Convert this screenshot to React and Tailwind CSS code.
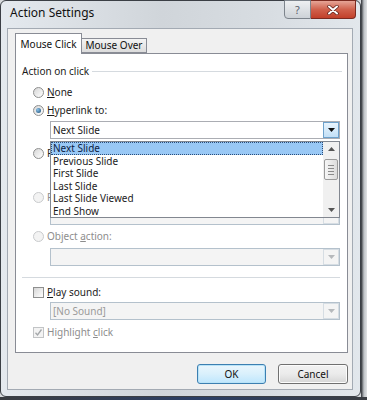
import React from "react";

const ui = "font-['Noto_Sans',sans-serif]";

function Radio({ checked, disabled }) {
  return (
    <span
      className={`flex h-[11px] w-[11px] shrink-0 items-center justify-center rounded-full border ${
        disabled
          ? "border-[#c9cbcd] bg-[#f3f3f3]"
          : "border-[#8e8f8f] bg-[linear-gradient(135deg,#d6d6d6,#ffffff)]"
      }`}
    >
      {checked ? (
        <span className="h-[5px] w-[5px] rounded-full bg-[radial-gradient(circle_at_35%_35%,#8cc3ea,#174a73)]" />
      ) : null}
    </span>
  );
}

function Check({ checked, disabled }) {
  return (
    <span
      className={`flex h-[11px] w-[11px] shrink-0 items-center justify-center border ${
        disabled
          ? "border-[#c2c4c6] bg-[#f3f3f3]"
          : "border-[#8e8f8f] bg-[linear-gradient(135deg,#d6d6d6,#ffffff)]"
      }`}
    >
      {checked ? (
        <svg width="9" height="9" viewBox="0 0 9 9">
          <path d="M1.5 4.8 L3.5 7 L7.5 1.5" fill="none" stroke="#a4a7aa" strokeWidth="1.3" />
        </svg>
      ) : null}
    </span>
  );
}

function Arrow({ color }) {
  return (
    <svg width="7" height="4" viewBox="0 0 7 4">
      <path d="M0 0 H7 L3.5 4 Z" fill={color} />
    </svg>
  );
}

function Combo({ value, hot, disabled }) {
  return (
    <div
      className={`ml-[34px] flex h-[18px] w-[290px] items-center border ${
        disabled ? "border-[#b4c1cc] bg-[#f4f4f4]" : "border-[#abadb3] bg-white"
      }`}
    >
      <span
        className={`flex-1 pl-[2px] text-[10px] leading-none ${
          disabled ? "text-[#9a9a9a]" : "text-[#1b1b1b]"
        }`}
      >
        {value}
      </span>
      <span
        className={`flex h-[16px] w-[16px] items-center justify-center border ${
          hot
            ? "border-[#6ea2cc] bg-[linear-gradient(#e8f4fd,#c3e0f6)]"
            : disabled
            ? "border-[#d6dde3] bg-[#f4f4f4]"
            : "border-[#c8c8c8] bg-[#eeeeee]"
        }`}
      >
        <Arrow color={hot ? "#111" : "#b6b9bc"} />
      </span>
    </div>
  );
}

function OptionRow({ children, control, dim, clipped }) {
  return (
    <div className="ml-[17px] flex h-[14px] items-center gap-[3px]">
      {control}
      <span
        className={`text-[10px] leading-none ${dim ? "text-[#8d8d8d]" : "text-[#1b1b1b]"} ${
          clipped ? "w-[3px] overflow-hidden whitespace-nowrap" : ""
        }`}
      >
        {children}
      </span>
    </div>
  );
}

const slides = ["Next Slide", "Previous Slide", "First Slide", "Last Slide", "Last Slide Viewed", "End Show"];

function SlideList() {
  return (
    <div className="absolute left-[34px] top-[87px] flex h-[77px] w-[290px] border border-[#828790] bg-white">
      <div className="flex-1">
        {slides.map((s, i) => (
          <div
            key={s}
            className={`h-[12.5px] pl-px text-[10px] leading-[11px] ${
              i === 0
                ? "border border-dotted border-[#2a4d7a] bg-[#99c8f5] text-[#0b1c44]"
                : "border border-transparent text-[#1b1b1b]"
            }`}
          >
            {s}
          </div>
        ))}
      </div>
      <div className="flex w-[16px] flex-col items-center bg-[#f0f0f0]">
        <div className="flex h-[14px] items-center justify-center">
          <svg width="7" height="4" viewBox="0 0 7 4">
            <path d="M0 4 H7 L3.5 0 Z" fill="#555" />
          </svg>
        </div>
        <div className="mt-[3px] flex h-[21px] w-[14px] flex-col items-center justify-center gap-[2px] rounded-[2px] border border-[#9a9a9a] bg-[linear-gradient(90deg,#f6f6f6,#dcdcdc)]">
          <span className="h-px w-[6px] bg-[#8a8a8a]" />
          <span className="h-px w-[6px] bg-[#8a8a8a]" />
          <span className="h-px w-[6px] bg-[#8a8a8a]" />
          <span className="h-px w-[6px] bg-[#8a8a8a]" />
        </div>
        <div className="mt-auto flex h-[14px] items-center justify-center">
          <Arrow color="#555" />
        </div>
      </div>
    </div>
  );
}

export default function App() {
  return (
    <div className={`flex h-[400px] w-[367px] flex-col overflow-hidden bg-[#d6d9dc] ${ui}`}>
      <div className="flex h-[397px]">
        <div className="flex h-[397px] w-[361px] flex-col rounded-[6px] border border-[#3b3f45] bg-[linear-gradient(90deg,#e4e9ee,#d0d5da_45%,#d8dde2_75%,#e2e7ec)]">
          {/* title bar */}
          <div className="flex h-[27px] items-start">
            <span className="ml-[9px] mt-[5px] text-[12px] leading-[14px] text-[#111]">Action Settings</span>
            <div className="ml-auto mr-[4px] flex -mt-px">
              <div className="flex h-[19px] w-[27px] items-center justify-center rounded-bl-[4px] border border-[#7d848c] bg-[linear-gradient(#eef0f2,#cdd2d7)] text-[11px] leading-none text-[#58606a]">
                ?
              </div>
              <div className="flex h-[19px] w-[45px] items-center justify-center rounded-br-[4px] border border-l-0 border-[#7b2a20] bg-[linear-gradient(#e6a597,#d0614c_50%,#c2402a)]">
                <svg width="12" height="10" viewBox="0 0 12 10">
                  <path d="M2 1.5 L10 8.5 M10 1.5 L2 8.5" stroke="#5a1d16" strokeWidth="3.4" strokeLinecap="round" />
                  <path d="M2 1.5 L10 8.5 M10 1.5 L2 8.5" stroke="#ffffff" strokeWidth="2" strokeLinecap="round" />
                </svg>
              </div>
            </div>
          </div>

          {/* client area */}
          <div className="ml-[6px] h-[362px] w-[346px] border border-[#a3aab3] bg-[#f0f0f0]">
            <div className="ml-[7px] mt-[4px] flex h-[20px] items-end">
              <div className="relative z-10 -mb-px flex h-[21px] w-[67px] items-center justify-center border border-b-0 border-[#898c95] bg-white text-[10px] text-[#111]">
                Mouse Click
              </div>
              <div className="flex h-[15px] w-[65px] items-center justify-center border border-l-0 border-[#898c95] bg-[linear-gradient(#f4f4f4,#dcdcdc)] text-[10px] text-[#111]">
                Mouse Over
              </div>
            </div>

            <div className="relative ml-[7px] h-[300px] w-[333px] border border-[#898c95] bg-white">
              <div className="mt-[10px] flex h-[14px] items-center">
                <span className="ml-[6px] text-[10px] leading-none text-[#1b1b1b]">Action on click</span>
                <span className="ml-[3px] h-px w-[250px] bg-[#d5dadf]" />
              </div>

              <div className="mt-[7px]">
                <OptionRow control={<Radio />}>
                  <span className="underline underline-offset-1">N</span>one
                </OptionRow>
              </div>
              <div className="mt-[4px]">
                <OptionRow control={<Radio checked />}>
                  <span className="underline underline-offset-1">H</span>yperlink to:
                </OptionRow>
              </div>
              <div className="mt-[4px]">
                <Combo value="Next Slide" hot />
              </div>

              <div className="mt-[7px]">
                <OptionRow control={<Radio />} clipped>
                  Run program:
                </OptionRow>
              </div>
              <div className="ml-[34px] mt-[4px] h-[18px] w-[220px] border border-[#abadb3] bg-white" />
              <div className="mt-[8px]">
                <OptionRow control={<Radio disabled />} dim clipped>
                  Run macro:
                </OptionRow>
              </div>
              <div className="mt-[3px]">
                <Combo value="" disabled />
              </div>

              <div className="mt-[4px]">
                <OptionRow control={<Radio disabled />} dim>
                  Object <span className="underline underline-offset-1">a</span>ction:
                </OptionRow>
              </div>
              <div className="mt-[5px]">
                <Combo value="" disabled />
              </div>

              <div className="ml-[6px] mt-[11px] h-px w-[318px] bg-[#d5dadf]" />

              <div className="mt-[7px]">
                <OptionRow control={<Check />}>
                  <span className="underline underline-offset-1">P</span>lay sound:
                </OptionRow>
              </div>
              <div className="mt-[3px]">
                <Combo value="[No Sound]" disabled />
              </div>
              <div className="mt-[5px]">
                <OptionRow control={<Check checked disabled />} dim>
                  Highlight <span className="underline underline-offset-1">c</span>lick
                </OptionRow>
              </div>

              <SlideList />
            </div>

            <div className="mt-[11px] flex w-[340px] justify-end gap-[12px]">
              <button className="flex h-[20px] w-[69px] items-center justify-center rounded-[3px] border border-[#3c7fb1] bg-[linear-gradient(#eaf6fd,#d9f0fc_50%,#bee6fd)] text-[10px] text-[#111] shadow-[inset_0_0_0_1px_#b8e3f8]">
                OK
              </button>
              <button className="flex h-[20px] w-[70px] items-center justify-center rounded-[3px] border border-[#707070] bg-[linear-gradient(#f2f2f2,#ebebeb_50%,#d6d6d6)] text-[10px] text-[#111] shadow-[inset_0_0_0_1px_#fcfcfc]">
                Cancel
              </button>
            </div>
          </div>
        </div>
        <div className="w-[6px] bg-[linear-gradient(90deg,#2e3136,#bfc3c7_50%,#e0e2e4)]" />
      </div>
      <div className="h-[3px] bg-[linear-gradient(90deg,#3a3d42,#2b3f66_55%,#3a3d42)]" />
    </div>
  );
}
